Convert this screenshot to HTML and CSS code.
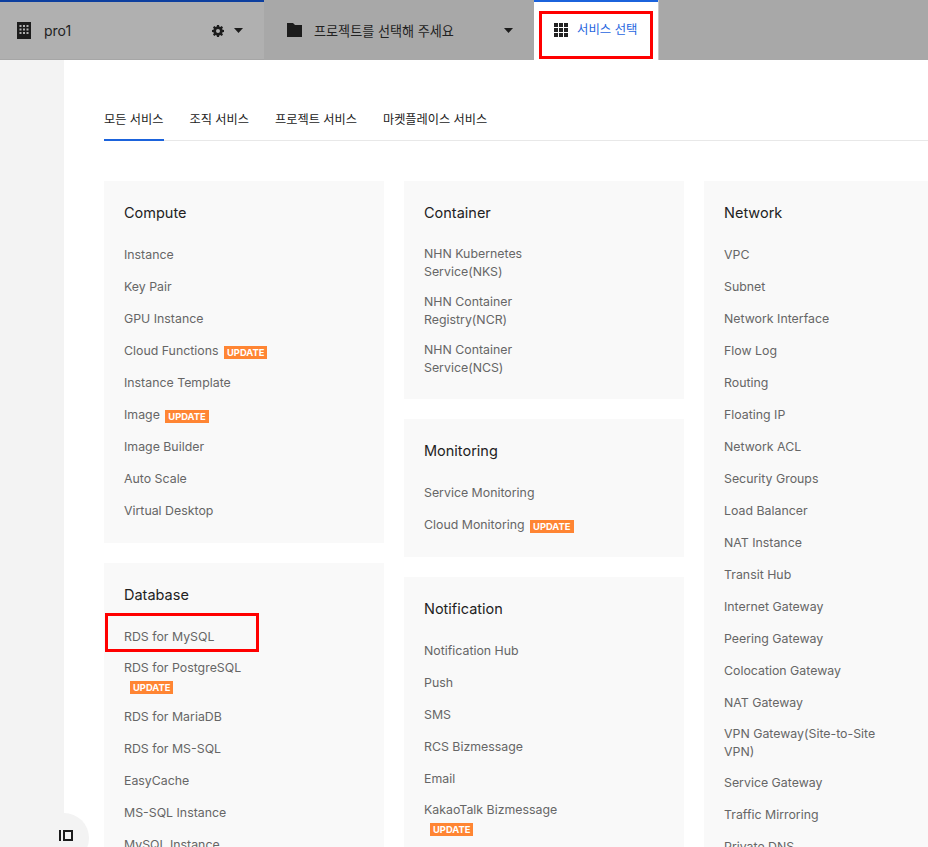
FILE: index.html
```html
<!DOCTYPE html>
<html lang="ko">
<head>
<meta charset="utf-8">
<title>서비스 선택</title>
<link rel="stylesheet" href="styles.css">
</head>
<body>
<header class="topbar">
  <div class="org">
    <svg class="org-icon" width="14" height="17" viewBox="0 0 14 17"><rect width="14" height="17" fill="#1c1c1c"/><g fill="#b0b0b0"><rect x="2.5" y="3" width="2" height="2"/><rect x="6" y="3" width="2" height="2"/><rect x="9.5" y="3" width="2" height="2"/><rect x="2.5" y="6.500" width="2" height="2"/><rect x="6" y="6.500" width="2" height="2"/><rect x="9.5" y="6.500" width="2" height="2"/><rect x="2.5" y="10" width="2" height="2"/><rect x="6" y="10" width="2" height="2"/><rect x="9.5" y="10" width="2" height="2"/></g></svg>
    <span class="org-name">pro1</span>
    <svg class="gear" width="12" height="12" viewBox="0 0 12 12"><path fill="#1c1c1c" fill-rule="evenodd" d="M5 0h2l.3 1.600 1 .4L9.700 1.100 11 2.400l-.9 1.300.4 1 1.500.3v2l-1.500.3-.4 1 .9 1.300L9.700 10.900l-1.400-.9-1 .4L7 12H5l-.3-1.600-1-.4-1.400.9L1 9.600l.9-1.300-.4-1L0 7V5l1.500-.3.4-1L1 2.400 2.300 1.100l1.400.9 1-.4zM6 4a2 2 0 1 0 0 4 2 2 0 0 0 0-4z"/></svg>
    <svg class="caret" width="9" height="5" viewBox="0 0 9 5"><path fill="#1c1c1c" d="M0 0h9L4.500 5z"/></svg>
  </div>
  <div class="project">
    <svg class="folder" width="15" height="14" viewBox="0 0 15 14"><path fill="#1c1c1c" d="M0 0h6l2 2h7v12H0z"/></svg>
    <span class="project-name">프로젝트를 선택해 주세요</span>
    <svg class="caret" width="9" height="5" viewBox="0 0 9 5"><path fill="#1c1c1c" d="M0 0h9L4.500 5z"/></svg>
  </div>
  <div class="services">
    <svg class="grid-icon" width="14" height="14" viewBox="0 0 14 14"><g fill="#222"><rect width="4" height="4"/><rect x="5" width="4" height="4"/><rect x="10" width="4" height="4"/><rect y="5" width="4" height="4"/><rect x="5" y="5" width="4" height="4"/><rect x="10" y="5" width="4" height="4"/><rect y="10" width="4" height="4"/><rect x="5" y="10" width="4" height="4"/><rect x="10" y="10" width="4" height="4"/></g></svg>
    <span>서비스 선택</span>
    <div class="mark mark-services"></div>
  </div>
  <div class="topbar-rest"></div>
</header>
<div class="body">
  <aside class="sidebar">
    <button class="toggle">
      <svg width="14" height="11" viewBox="0 0 14 11"><path fill="#1c1c1c" d="M0 0h2v11H0z"/><path fill="none" stroke="#1c1c1c" stroke-width="2" d="M5 1h8v9H5z"/></svg>
    </button>
  </aside>
  <main class="main">
    <nav class="tabs">
      <a class="tab active">모든 서비스</a>
      <a class="tab">조직 서비스</a>
      <a class="tab">프로젝트 서비스</a>
      <a class="tab">마켓플레이스 서비스</a>
    </nav>
    <div class="columns">
      <div class="column">
        <section class="card">
          <h2>Compute</h2>
          <ul>
            <li>Instance</li>
            <li>Key Pair</li>
            <li>GPU Instance</li>
            <li>Cloud Functions <b class="badge">UPDATE</b></li>
            <li>Instance Template</li>
            <li>Image <b class="badge">UPDATE</b></li>
            <li>Image Builder</li>
            <li>Auto Scale</li>
            <li>Virtual Desktop</li>
          </ul>
        </section>
        <section class="card">
          <h2>Database</h2>
          <ul>
            <li class="marked">RDS for MySQL<div class="mark mark-rds"></div></li>
            <li class="two">RDS for PostgreSQL<br><b class="badge">UPDATE</b></li>
            <li>RDS for MariaDB</li>
            <li>RDS for MS-SQL</li>
            <li>EasyCache</li>
            <li>MS-SQL Instance</li>
            <li>MySQL Instance</li>
          </ul>
        </section>
      </div>
      <div class="column">
        <section class="card">
          <h2>Container</h2>
          <ul>
            <li class="two">NHN Kubernetes<br>Service(NKS)</li>
            <li class="two">NHN Container<br>Registry(NCR)</li>
            <li class="two">NHN Container<br>Service(NCS)</li>
          </ul>
        </section>
        <section class="card">
          <h2>Monitoring</h2>
          <ul>
            <li>Service Monitoring</li>
            <li>Cloud Monitoring <b class="badge">UPDATE</b></li>
          </ul>
        </section>
        <section class="card">
          <h2>Notification</h2>
          <ul>
            <li>Notification Hub</li>
            <li>Push</li>
            <li>SMS</li>
            <li>RCS Bizmessage</li>
            <li>Email</li>
            <li class="two">KakaoTalk Bizmessage<br><b class="badge">UPDATE</b></li>
          </ul>
        </section>
      </div>
      <div class="column">
        <section class="card">
          <h2>Network</h2>
          <ul>
            <li>VPC</li>
            <li>Subnet</li>
            <li>Network Interface</li>
            <li>Flow Log</li>
            <li>Routing</li>
            <li>Floating IP</li>
            <li>Network ACL</li>
            <li>Security Groups</li>
            <li>Load Balancer</li>
            <li>NAT Instance</li>
            <li>Transit Hub</li>
            <li>Internet Gateway</li>
            <li>Peering Gateway</li>
            <li>Colocation Gateway</li>
            <li>NAT Gateway</li>
            <li class="two">VPN Gateway(Site-to-Site<br>VPN)</li>
            <li>Service Gateway</li>
            <li>Traffic Mirroring</li>
            <li>Private DNS</li>
          </ul>
        </section>
      </div>
    </div>
  </main>
</div>
</body>
</html>
```
FILE: styles.css
```css
* { box-sizing: border-box; }
html, body { height: 100%; }
body {
  margin: 0;
  overflow: hidden;
  background: #fff;
  color: #222;
  font-family: Inter, "Noto Sans CJK KR", sans-serif;
}
.topbar { display: flex; height: 60px; }
.org {
  width: 264px;
  display: flex;
  align-items: center;
  padding: 0 21px 0 17px;
  background: #b0b0b0;
  border-top: 2px solid #0d3f9f;
  border-bottom: 1px solid #a6a6a6;
}
.org-name { flex: 1; margin-left: 13px; font-size: 14px; color: #222; }
.gear { margin-right: 10px; }
.project {
  width: 270px;
  display: flex;
  align-items: center;
  padding: 0 21px 0 23px;
  background: #a8a8a8;
}
.project-name { flex: 1; margin-left: 12px; font-size: 13.1px; color: #222; }
.services {
  position: relative;
  width: 124px;
  display: flex;
  align-items: flex-start;
  padding: 21px 0 0 20px;
  background: #fff;
  border-top: 2px solid #1b63dc;
  color: #1f66e0;
  font-size: 12.4px;
}
.services span { margin-left: 9px; line-height: 14px; }
.topbar-rest { flex: 1; background: #a8a8a8; border-left: 1px solid #c8c8c8; }
.mark { position: absolute; border: 3px solid #f00; }
.mark-services { left: 5px; top: 9px; width: 114px; height: 48px; }
.mark-rds { left: -19px; top: -8px; width: 154px; height: 39px; }
.body { display: flex; height: 787px; }
.sidebar { position: relative; width: 64px; background: #f3f3f3; flex: none; }
.toggle {
  position: absolute;
  left: 0;
  top: 753px;
  width: 89px;
  height: 50px;
  padding: 0 16px 6px 0;
  border: 0;
  border-radius: 0 25px 25px 0;
  background: #f3f3f3;
  display: flex;
  align-items: center;
  justify-content: flex-end;
}
.main { flex: 1; min-width: 0; padding: 40px 0 0 40px; overflow: hidden; }
.tabs {
  display: flex;
  gap: 26px;
  height: 41px;
  border-bottom: 1px solid #e8e8e8;
  font-size: 12.2px;
}
.tab { height: 41px; padding-top: 11px; line-height: 18px; color: #222; }
.tab.active { border-bottom: 2px solid #1b63dc; }
.columns { display: flex; gap: 20px; margin-top: 40px; }
.column { flex: none; width: 280px; display: flex; flex-direction: column; gap: 20px; }
.card { padding: 20px 20px 16px; background: #f9f9f9; }
.card h2 {
  margin: 0 0 14px;
  height: 24px;
  font-size: 14.5px;
  font-weight: 400;
  line-height: 24px;
  color: #222;
}
.card ul { margin: 0; padding: 0; list-style: none; }
.card li {
  position: relative;
  display: block;
  padding: 7px 0;
  font-size: 12.35px;
  line-height: 18px;
  color: #666;
}
.card li.two { padding: 6px 0; }
.badge {
  display: inline-block;
  margin-left: 2px;
  padding: 0 3px;
  height: 13px;
  background: #ff8533;
  color: #fff;
  font-size: 9.4px;
  font-weight: 700;
  line-height: 13px;
  vertical-align: -1px;
}
.two .badge { margin-left: 6px; }
```
